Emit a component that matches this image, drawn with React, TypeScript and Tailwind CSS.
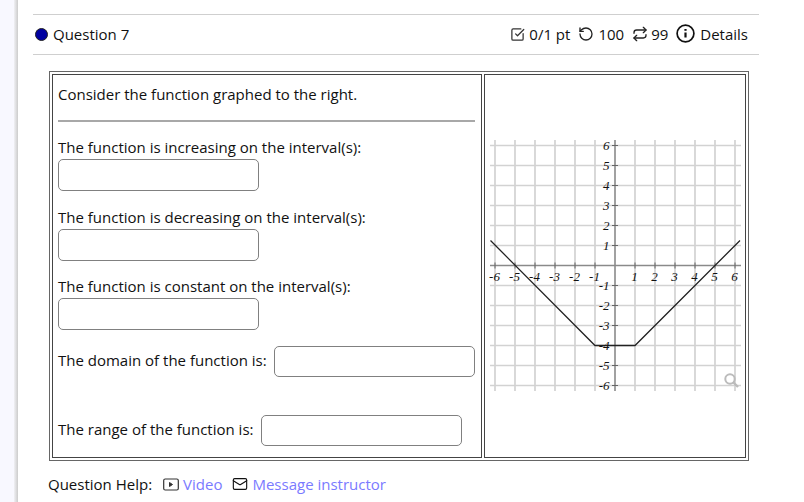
import { SquareCheckBig, RotateCcw, Repeat, Mail } from "lucide-react";

const ticks = [-6, -5, -4, -3, -2, -1, 1, 2, 3, 4, 5, 6];
const X = (v: number) => 125 + v * 20;
const Y = (v: number) => 125.5 - v * 20;

function Graph() {
  return (
    <svg width="251" height="251" viewBox="0 0 251 251" className="block overflow-visible">
      {ticks.map((t) => (
        <g key={t} stroke="#d2d2d2" strokeWidth="1.7">
          <line x1={X(t)} y1="0" x2={X(t)} y2="251" />
          <line x1="0" y1={Y(t)} x2="251" y2={Y(t)} />
        </g>
      ))}
      <line x1="0" y1="125.5" x2="251" y2="125.5" stroke="#8a8a8a" strokeWidth="1.6" />
      <line x1="125" y1="0" x2="125" y2="251" stroke="#8a8a8a" strokeWidth="1.6" />
      {ticks.map((t) => (
        <g key={"k" + t} stroke="#666" strokeWidth="1">
          <line x1={X(t)} y1="122.5" x2={X(t)} y2="128.5" />
          <line x1="122" y1={Y(t)} x2="128" y2={Y(t)} />
        </g>
      ))}
      <polyline
        points={`0.5,100.5 ${X(-1)},${Y(-4)} ${X(1)},${Y(-4)} 250,100.5`}
        fill="none"
        stroke="#222"
        strokeWidth="1.3"
      />
      <g fontFamily='"Liberation Serif", serif' fontStyle="italic" fontSize="13" fill="#111">
        {ticks.map((t) => (
          <text key={"x" + t} x={X(t) - 0.5} y="140.5" textAnchor="middle">
            {t}
          </text>
        ))}
        {ticks.map((t) => (
          <text key={"y" + t} x="119.5" y={Y(t) + 4} textAnchor="end">
            {t}
          </text>
        ))}
      </g>
      <circle cx="240" cy="239" r="4.7" fill="none" stroke="#bbb" strokeWidth="2" />
      <line x1="243.5" y1="242.5" x2="248" y2="247" stroke="#bbb" strokeWidth="2.4" />
    </svg>
  );
}

function Field({ className }: { className: string }) {
  return <input type="text" className={"h-[32px] w-[201px] shrink-0 rounded-[5px] border border-[#808080] bg-white " + className} />;
}

export default function App() {
  return (
    <div className="flex h-[502px] w-[804px] overflow-hidden bg-white font-['Open_Sans',sans-serif] text-[15px] leading-[24px] text-[#111]">
      <div className="h-full w-[14px] shrink-0 bg-[#f8f8ff]" />
      <div className="h-full w-[4px] shrink-0 bg-gradient-to-r from-[#f0f0f4] to-[#cccccc]" />
      <div className="flex w-[741px] flex-col pl-[15px] pt-[14px]">
        <div className="flex h-[41px] shrink-0 items-center justify-between border-y border-[#cfcfcf] pb-[1px] pl-[2px] pr-[11px]">
          <div className="flex items-center gap-[5px]">
            <span className="h-[13px] w-[13px] rounded-full border border-[#222] bg-[#0000a0]" />
            <span>Question 7</span>
          </div>
          <div className="flex items-center">
            <SquareCheckBig size={15} strokeWidth={2} className="mr-[4px] text-[#333]" />
            <span>0/1 pt</span>
            <RotateCcw size={16} strokeWidth={2} className="ml-[8px] mr-[4px] text-[#222]" />
            <span>100</span>
            <Repeat size={16} strokeWidth={2} className="ml-[8px] mr-[3px] text-[#222]" />
            <span>99</span>
            <svg width="19" height="19" viewBox="0 0 19 19" className="ml-[8px] mr-[5px] -translate-y-[1px]" fill="none" stroke="#111" strokeWidth="1.7">
              <circle cx="9.5" cy="9.5" r="8.4" />
              <path d="M9.5 8.5v5" strokeWidth="2.2" />
              <path d="M9.5 5v1.8" strokeWidth="2.2" />
            </svg>
            <span>Details</span>
          </div>
        </div>
        <div className="ml-[16px] mt-[16px] flex h-[390px] w-[700px] shrink-0 gap-[2px] border border-[#666] p-[2px]">
          <div className="flex w-[432px] flex-col border border-[#444] pl-[5px] pr-[6px] pt-[7px]">
            <p>Consider the function graphed to the right.</p>
            <hr className="mt-[14px] h-[2px] border-0 bg-[#a8a8a8]" />
            <p className="mt-[13px]">The function is increasing on the interval(s):</p>
            <Field className="block" />
            <p className="mt-[14px]">The function is decreasing on the interval(s):</p>
            <Field className="block" />
            <p className="mt-[13px]">The function is constant on the interval(s):</p>
            <Field className="block" />
            <div className="mt-[16px] flex items-center gap-[7px]">
              <span className="-translate-y-[2px]">The domain of the function is:</span>
              <Field className="!h-[31px]" />
            </div>
            <div className="mt-[38px] flex items-center gap-[7px]">
              <span className="-translate-y-[2px]">The range of the function is:</span>
              <Field className="!h-[31px]" />
            </div>
          </div>
          <div className="flex w-[263px] items-center justify-center border border-[#444] pb-[1px]">
            <Graph />
          </div>
        </div>
        <div className="ml-[15px] mt-[11px] flex items-center">
          <span>Question Help:</span>
          <svg width="16" height="13" viewBox="0 0 16 13" className="ml-[11px] mr-[4px]" fill="none" stroke="#333" strokeWidth="1.2">
            <rect x="0.7" y="1" width="14.6" height="11" rx="1.5" />
            <path d="M6.5 4.5l3 2-3 2z" fill="#333" strokeWidth="1" />
          </svg>
          <span className="text-[#7a7aff]">Video</span>
          <Mail size={16} strokeWidth={1.7} className="ml-[10px] mr-[4px]" />
          <span className="text-[#7a7aff]">Message instructor</span>
        </div>
      </div>
    </div>
  );
}
